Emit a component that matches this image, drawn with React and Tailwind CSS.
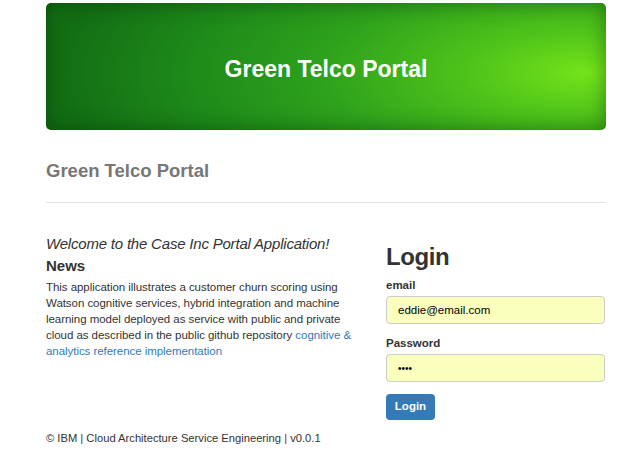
const App = () => {
  return (
    <div className="min-h-screen bg-white font-['Liberation_Sans',Arial,sans-serif] text-[#333]">
      <div className="ml-[46px] w-[560px] pt-[3px]">
        <div className="flex h-[127px] items-center justify-center rounded-[5px] bg-[radial-gradient(ellipse_95%_150%_at_97%_55%,#74e41a_0%,#50c41a_22%,#2ea21c_50%,#1e8a1a_75%,#136e14_100%)] shadow-[inset_0_0_20px_rgba(0,40,0,0.45)]">
          <h1 className="pt-[6px] text-[23px] font-bold text-white">Green Telco Portal</h1>
        </div>

        <h2 className="mt-[29px] text-[18.5px] font-bold leading-[24px] text-[#777]">
          Green Telco Portal
        </h2>
        <hr className="mt-[19px] border-t border-[#e5e5e5]" />

        <div className="mt-[31px] flex">
          <div className="w-[320px]">
            <p className="text-[15px] italic leading-[20px] tracking-[-0.2px]">
              Welcome to the Case Inc Portal Application!
            </p>
            <h3 className="mt-[3px] text-[15px] font-bold leading-[18px]">News</h3>
            <p className="mt-[4px] text-[11.5px] leading-[16px] tracking-[-0.05px]">
              This application illustrates a customer churn scoring using
              Watson cognitive services, hybrid integration and machine
              learning model deployed as service with public and private cloud
              as described in the public github repository{" "}
              <a href="#" className="text-[#337ab7]">
                cognitive &amp; analytics reference implementation
              </a>
            </p>
          </div>

          <div className="ml-auto w-[220px]">
            <h2 className="mt-[8px] text-[24px] font-bold leading-[30px] tracking-[-0.4px] text-[#333]">
              Login
            </h2>
            <label className="mt-[6px] block text-[11.5px] font-bold leading-[15px]">
              email
            </label>
            <input
              type="text"
              defaultValue="eddie@email.com"
              className="mt-[3px] block h-[28px] w-[219px] rounded-[4px] border border-[#ccc] bg-[#faffbd] px-[11px] text-[11.5px] text-black outline-none"
            />
            <label className="mt-[12px] block text-[11.5px] font-bold leading-[15px]">
              Password
            </label>
            <input
              type="password"
              defaultValue="pass"
              className="mt-[3px] block h-[28px] w-[219px] rounded-[4px] border border-[#ccc] bg-[#faffbd] px-[11px] text-[10px] text-black outline-none"
            />
            <button className="mt-[12px] h-[26px] w-[49px] rounded-[4px] bg-[#337ab7] text-[11.5px] font-bold text-white">
              Login
            </button>
          </div>
        </div>

        <p className="mt-[10px] text-[11.2px] leading-[17px]">
          © IBM <span className="text-[#1a3a8a]">|</span> Cloud Architecture Service
          Engineering <span className="text-[#8a1a1a]">|</span> v0.0.1
        </p>
      </div>
    </div>
  );
};

export default App;
